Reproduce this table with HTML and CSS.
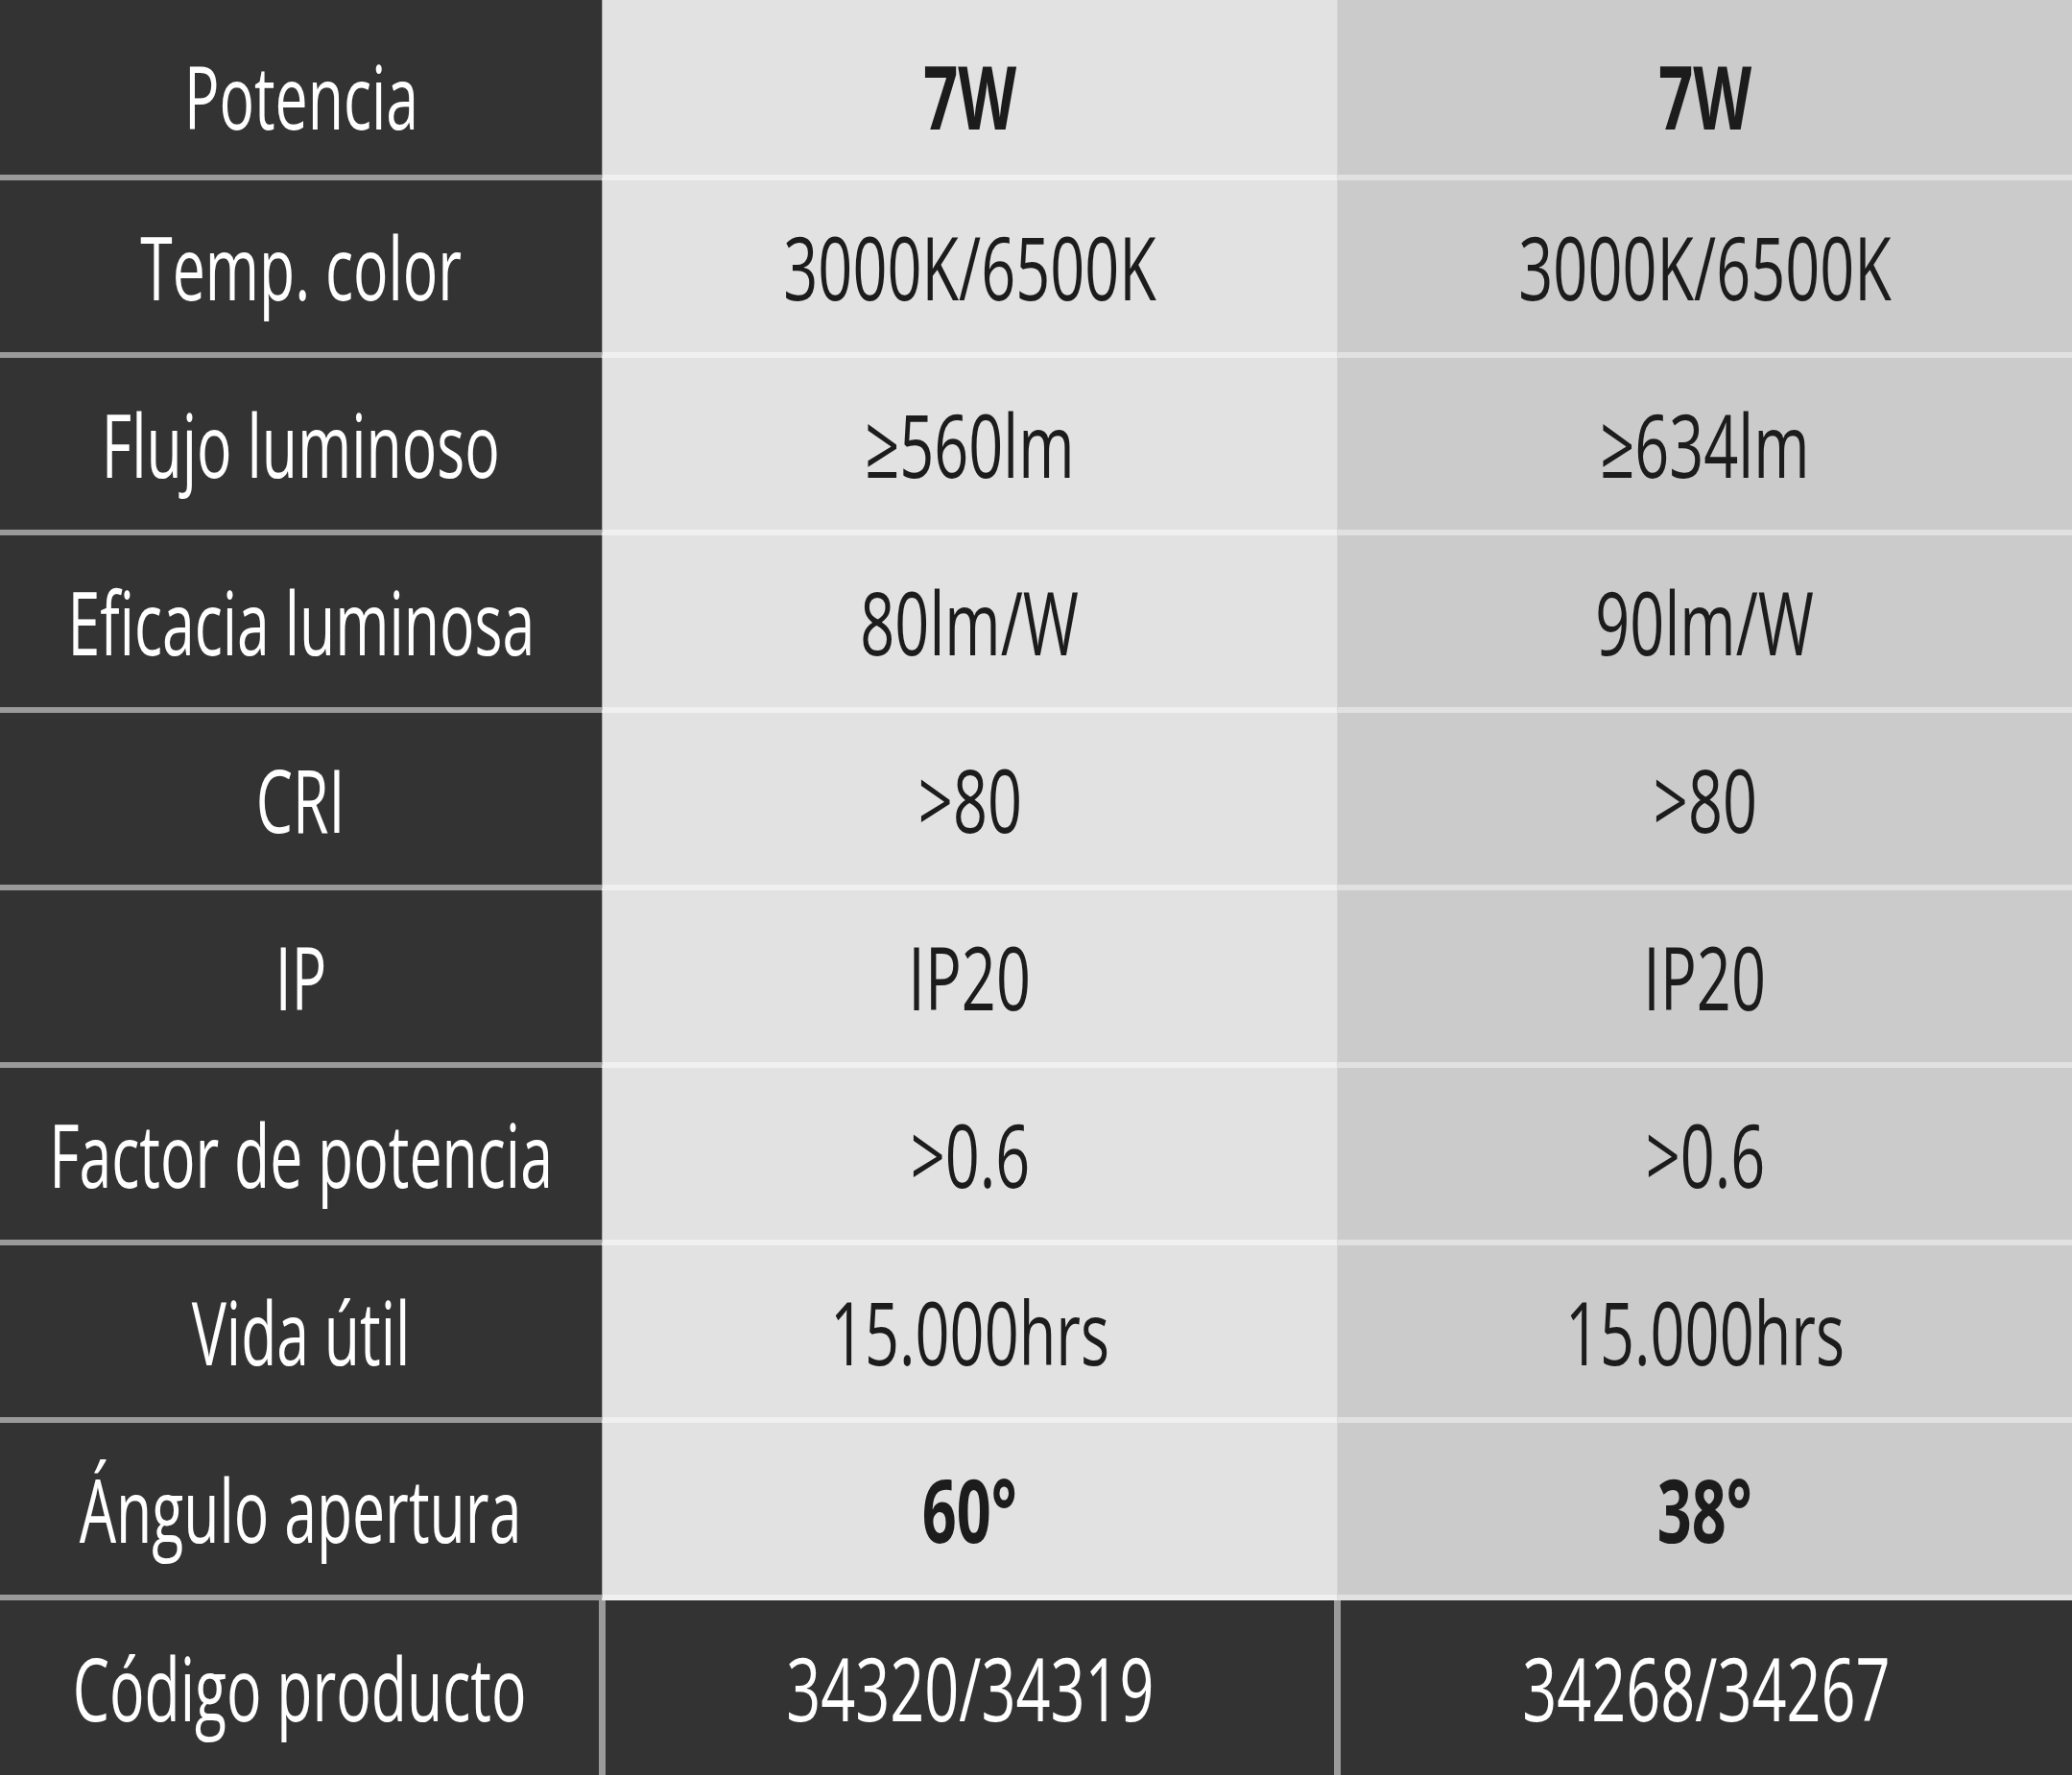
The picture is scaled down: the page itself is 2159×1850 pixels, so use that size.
FILE: index.html
```html
<!DOCTYPE html>
<html lang="es">
<head>
<meta charset="utf-8">
<title>Especificaciones</title>
<link rel="stylesheet" href="styles.css">
</head>
<body>
<div class="spec">
  <div class="row first">
    <div class="cell label"><span class="t">Potencia</span></div>
    <div class="cell a"><span class="t b">7W</span></div>
    <div class="cell c"><span class="t b">7W</span></div>
  </div>
  <div class="row">
    <div class="cell label"><span class="t">Temp. color</span></div>
    <div class="cell a"><span class="t">3000K/6500K</span></div>
    <div class="cell c"><span class="t">3000K/6500K</span></div>
  </div>
  <div class="row">
    <div class="cell label"><span class="t">Flujo luminoso</span></div>
    <div class="cell a"><span class="t">≥560lm</span></div>
    <div class="cell c"><span class="t">≥634lm</span></div>
  </div>
  <div class="row">
    <div class="cell label"><span class="t">Eficacia luminosa</span></div>
    <div class="cell a"><span class="t">80lm/W</span></div>
    <div class="cell c"><span class="t">90lm/W</span></div>
  </div>
  <div class="row">
    <div class="cell label"><span class="t">CRI</span></div>
    <div class="cell a"><span class="t">&gt;80</span></div>
    <div class="cell c"><span class="t">&gt;80</span></div>
  </div>
  <div class="row">
    <div class="cell label"><span class="t">IP</span></div>
    <div class="cell a"><span class="t">IP20</span></div>
    <div class="cell c"><span class="t">IP20</span></div>
  </div>
  <div class="row">
    <div class="cell label"><span class="t">Factor de potencia</span></div>
    <div class="cell a"><span class="t">&gt;0.6</span></div>
    <div class="cell c"><span class="t">&gt;0.6</span></div>
  </div>
  <div class="row">
    <div class="cell label"><span class="t">Vida útil</span></div>
    <div class="cell a"><span class="t">15.000hrs</span></div>
    <div class="cell c"><span class="t">15.000hrs</span></div>
  </div>
  <div class="row">
    <div class="cell label"><span class="t">Ángulo apertura</span></div>
    <div class="cell a"><span class="t b">60°</span></div>
    <div class="cell c"><span class="t b">38°</span></div>
  </div>
  <div class="row foot">
    <div class="cell label"><span class="t">Código producto</span></div>
    <div class="cell fa"><span class="t">34320/34319</span></div>
    <div class="cell fc"><span class="t">34268/34267</span></div>
  </div>
</div>
</body>
</html>
```

FILE: styles.css
```css
html, body {
  margin: 0;
  padding: 0;
  background: #333333;
}

.spec {
  width: 2159px;
  height: 1850px;
  overflow: hidden;
  font-family: "Open Sans", "Liberation Sans", sans-serif;
}

.row {
  display: grid;
  grid-template-columns: 627px 766px 766px;
  height: 185px;
}

.row.first {
  height: 188px;
}

.cell {
  box-sizing: border-box;
  display: flex;
  align-items: center;
  justify-content: center;
  border-bottom: 6px solid;
  overflow: hidden;
}

.first .cell {
  padding-top: 18px;
}

.label {
  background: #333333;
  color: #ffffff;
  border-bottom-color: #9a9a9a;
}

.a {
  background: #e2e2e2;
  color: #1c1c1c;
  border-bottom-color: #f0f0f0;
  border-left: 1px solid #ababab;
}

.c {
  background: #cbcbcb;
  color: #1c1c1c;
  border-bottom-color: #e1e1e1;
  border-left: 1px solid #d6d6d6;
}

.row.foot {
  height: 182px;
  grid-template-columns: 624px 766px 769px;
}

.foot .cell {
  border-bottom: 0;
  background: #333333;
  color: #ffffff;
}

.foot .fa,
.foot .fc {
  border-left: 7px solid #9a9a9a;
}

.t {
  display: inline-block;
  font-size: 92px;
  line-height: 1;
  white-space: nowrap;
  transform: scaleX(0.66);
  transform-origin: center center;
  font-weight: 400;
}

.a .t,
.c .t,
.fa .t,
.fc .t {
  transform: scaleX(0.685);
}

.t.b {
  font-weight: 700;
}
```
